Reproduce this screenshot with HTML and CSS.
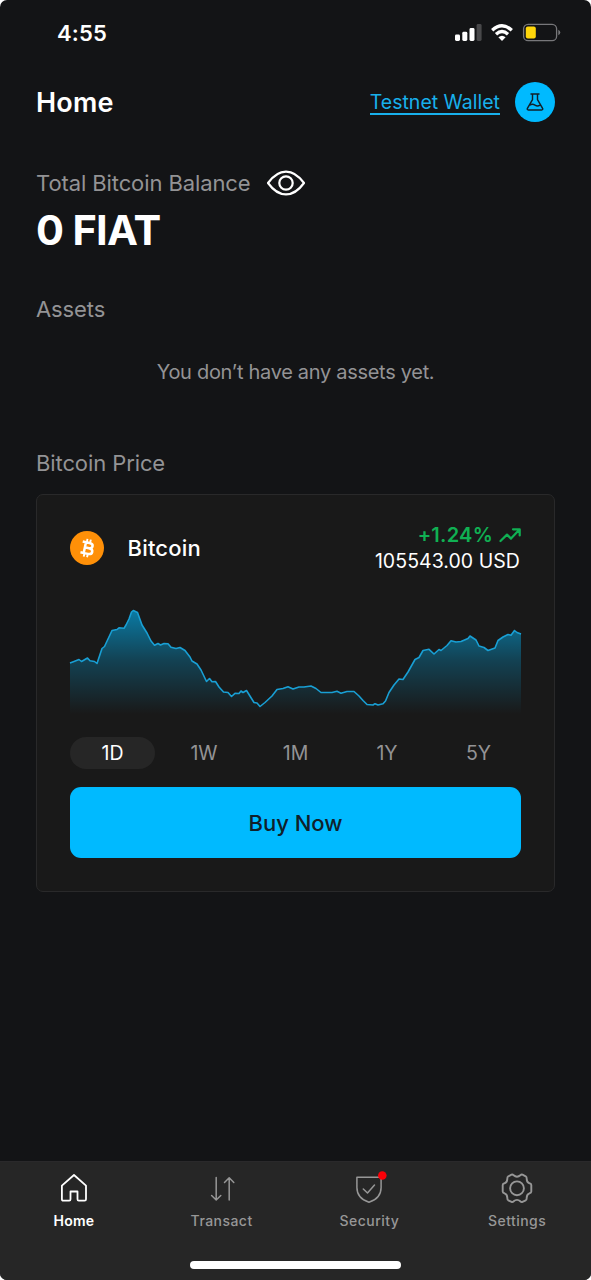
FILE: index.html
```html
<!DOCTYPE html>
<html lang="en">
<head>
<meta charset="utf-8">
<title>Home</title>
<link rel="stylesheet" href="styles.css">
</head>
<body>
<div class="screen">
  <div class="status">
    <span class="time">4:55</span>
    <svg class="status-icons" width="108" height="22" viewBox="453 22 108 22">
      <g fill="#fff">
        <rect x="455" y="34.500" width="5" height="6.500" rx="1.400"/>
        <rect x="462.300" y="31.800" width="5" height="9.200" rx="1.400"/>
        <rect x="469.500" y="28" width="5" height="13" rx="1.400"/>
        <rect x="476.600" y="24" width="5" height="17" rx="1.400" fill="#48484a"/>
      </g>
      <g fill="none" stroke="#fff" stroke-width="3.300">
        <path d="M492.200 30.300Q502 21.200 511.800 30.300"/>
        <path d="M496 34.300Q502 28.800 508 34.300"/>
      </g>
      <path d="M498.400 37.300Q502 34.200 505.600 37.300L502 41Z" fill="#fff"/>
      <rect x="523.600" y="24.300" width="33" height="16.400" rx="4.500" fill="none" stroke="#77777a" stroke-width="1.300"/>
      <rect x="525.800" y="26.400" width="10" height="12.200" rx="2" fill="#ffd60a"/>
      <path d="M558.300 29.800Q560.300 30.800 560.300 32.500T558.300 35.300Z" fill="#77777a"/>
    </svg>
  </div>

  <header class="header">
    <h1 class="title">Home</h1>
    <div class="wallet">
      <a class="wallet-link">Testnet Wallet</a>
      <span class="wallet-badge">
        <svg width="20" height="20" viewBox="0 0 20 20" fill="none" stroke="#10202a" stroke-width="1.450" stroke-linecap="round" stroke-linejoin="round">
          <path d="M6 2H14M7.500 2V7.600L2.400 16.300Q1.800 17.900 3.300 17.900H16.700Q18.200 17.900 17.600 16.300L12.500 7.600V2M4.800 13.100Q7.500 11.500 10 13.100T15 13.100"/>
        </svg>
      </span>
    </div>
  </header>

  <section class="balance">
    <div class="balance-label">
      <span class="label label-total">Total Bitcoin Balance</span>
      <svg width="40" height="28" viewBox="0 0 40 28" fill="none" stroke="#fff" stroke-width="2.200">
        <path d="M2 14C8 5.700 13.500 2.600 20 2.600S32 5.700 38 14C32 22.300 26.500 25.400 20 25.400S8 22.300 2 14Z" stroke-linejoin="round"/>
        <circle cx="20" cy="14" r="6.700"/>
      </svg>
    </div>
    <div class="amount">0 FIAT</div>
  </section>

  <h2 class="label label-assets">Assets</h2>
  <p class="empty">You don’t have any assets yet.</p>
  <h2 class="label label-price">Bitcoin Price</h2>

  <section class="card">
    <div class="coin">
      <svg width="34" height="34" viewBox="0 0 34 34">
        <circle cx="17" cy="17" r="17" fill="#ff9008"/>
        <g transform="rotate(12 17 17)" fill="none" stroke="#fff" stroke-width="2.500">
          <path d="M11.500 11.600H18.500C23.300 11.600 23.300 16.800 18.500 16.800H14.800H19C24.200 16.800 24.200 22.600 19 22.600H11.500M14.800 11.600V22.600"/>
          <path d="M15.600 8V11.500M19 8V11.500M15.600 22.600V26.100M19 22.600V26.100" stroke-width="1.900"/>
        </g>
      </svg>
      <span class="coin-name">Bitcoin</span>
      <div class="quote">
        <div class="change"><span>+1.24%</span>
          <svg width="22" height="16" viewBox="0 0 22 16" fill="none" stroke="#10b053" stroke-width="2.200" stroke-linejoin="round" stroke-linecap="round">
            <path d="M1.500 14L8 7.600L12 11.600L20 3M14 2.300H20.700V8.500"/>
          </svg>
        </div>
        <div class="price">105543.00 USD</div>
      </div>
    </div>

    <svg class="chart" width="451" height="120" viewBox="70 600 451 120">
      <defs>
        <linearGradient id="area" gradientUnits="userSpaceOnUse" x1="0" y1="608" x2="0" y2="714">
          <stop offset="0" stop-color="#00baff" stop-opacity=".62"/>
          <stop offset=".5" stop-color="#00baff" stop-opacity=".25"/>
          <stop offset="1" stop-color="#00baff" stop-opacity="0"/>
        </linearGradient>
      </defs>
      <path fill="url(#area)" d="M70 663L74 661.500 79 659.500 81.500 661.500 87.500 658 90 660.700 94.500 661.500 97 663.500 99.500 656 102 648.500 104.500 646.500 108 639 112 630.500 117 629.500 119 627.800 124 628.300 126 625 129 619 131.500 612 133.300 610.500 137.500 612.500 142 625 147 633 151 641 154.500 645.300 158 643.500 160.500 645 164 643.500 168 643.700 171 647.300 176 648.500 180 647.500 185 650.500 190 657 192 661 197 664 201 670 206.500 681.500 209.500 678.500 212 681.800 215.500 681.500 219 687 223.500 692 228 692.500 231.500 696.500 235 693.300 239 693.500 241 691 243 692.500 246.500 690.500 249 694.500 254 702.500 257 703 260 706.500 265 702.500 272 696 277 689.500 283 688.500 288 686.700 293 689 299 687 304 687 311 686 316 688.500 321 692.500 332 692.500 337 691.300 341 693.300 347 691.500 354 691.500 359 696 363 700.500 367 704.500 373 705 375 703.700 378 705 383 703.800 385.500 701 389 692.500 394 685 399 679 403 679.500 408 672 415 659.500 419 657.500 423 650.500 429 649.300 434 654 439 649.500 441 650.500 447 645.500 451 640.700 456 642 461 641.500 468 638.500 470 636 476 640 479 646 484 647.500 488 650.500 495 648 498 640.500 503 637 508 634.500 511 635.300 514.500 630.500 517 632.500 521 634V716H70Z"/>
      <path class="line" d="M70 663L74 661.500 79 659.500 81.500 661.500 87.500 658 90 660.700 94.500 661.500 97 663.500 99.500 656 102 648.500 104.500 646.500 108 639 112 630.500 117 629.500 119 627.800 124 628.300 126 625 129 619 131.500 612 133.300 610.500 137.500 612.500 142 625 147 633 151 641 154.500 645.300 158 643.500 160.500 645 164 643.500 168 643.700 171 647.300 176 648.500 180 647.500 185 650.500 190 657 192 661 197 664 201 670 206.500 681.500 209.500 678.500 212 681.800 215.500 681.500 219 687 223.500 692 228 692.500 231.500 696.500 235 693.300 239 693.500 241 691 243 692.500 246.500 690.500 249 694.500 254 702.500 257 703 260 706.500 265 702.500 272 696 277 689.500 283 688.500 288 686.700 293 689 299 687 304 687 311 686 316 688.500 321 692.500 332 692.500 337 691.300 341 693.300 347 691.500 354 691.500 359 696 363 700.500 367 704.500 373 705 375 703.700 378 705 383 703.800 385.500 701 389 692.500 394 685 399 679 403 679.500 408 672 415 659.500 419 657.500 423 650.500 429 649.300 434 654 439 649.500 441 650.500 447 645.500 451 640.700 456 642 461 641.500 468 638.500 470 636 476 640 479 646 484 647.500 488 650.500 495 648 498 640.500 503 637 508 634.500 511 635.300 514.500 630.500 517 632.500 521 634"/>
    </svg>

    <div class="ranges">
      <span class="range active">1D</span>
      <span class="range">1W</span>
      <span class="range">1M</span>
      <span class="range">1Y</span>
      <span class="range">5Y</span>
    </div>
    <button class="buy">Buy Now</button>
  </section>

  <nav class="nav">
    <div class="tabs">
      <div class="tab current">
        <svg width="34" height="34" viewBox="0 0 34 34"><path d="M17 4L29 14.600V28.300Q29 29.700 27.600 29.700H21.800Q20.500 29.700 20.500 28.300V20.500H13.500V28.300Q13.500 29.700 12.200 29.700H6.300Q4.900 29.700 4.900 28.300V14.600Z"/></svg>
        <span>Home</span>
      </div>
      <div class="tab">
        <svg width="34" height="34" viewBox="0 0 34 34"><path d="M11.200 6.500V28.700M6.600 24.500L11.200 29L15.800 24.500M24.200 29V7M19.500 11.500L24.200 6.800L28.800 11.500"/></svg>
        <span>Transact</span>
      </div>
      <div class="tab">
        <svg width="34" height="34" viewBox="0 0 34 34"><path d="M4.900 6.300H29.100V16.500C29.100 23.500 25.500 28.500 17 31.300C8.500 28.500 4.900 23.500 4.900 16.500ZM11.300 18L15.500 22L22.500 14"/><circle cx="30.300" cy="4.500" r="4.300" fill="#fb0007" stroke="none"/></svg>
        <span>Security</span>
      </div>
      <div class="tab">
        <svg width="34" height="34" viewBox="0 0 34 34" class="gear"><circle cx="17" cy="17.300" r="6.900"/><path d="M11.500 3.700Q12.600 3.200 13.700 4.300Q15.200 5.700 17 5.700T20.300 4.300Q21.400 3.200 22.500 3.700L25.700 5.300Q26.800 6 26.700 8Q26.800 11.500 29.500 12.300Q31.300 12.700 31.300 14V20.600Q31.300 21.900 29.500 22.300Q26.800 23.100 26.700 26.600Q26.800 28.600 25.700 29.300L22.500 30.900Q21.400 31.400 20.300 30.300Q18.800 28.900 17 28.900T13.700 30.300Q12.600 31.400 11.500 30.900L8.300 29.300Q7.200 28.600 7.300 26.600Q7.200 23.100 4.500 22.300Q2.700 21.900 2.700 20.600V14Q2.700 12.700 4.500 12.300Q7.200 11.500 7.300 8Q7.200 6 8.300 5.300Z"/></svg>
        <span>Settings</span>
      </div>
    </div>
    <div class="home-bar"></div>
  </nav>
</div>
</body>
</html>
```
FILE: styles.css
```css
* { box-sizing: border-box; }
body { margin: 0; background: #fff; font-family: Inter, "Liberation Sans", sans-serif; }
h1, h2, p { margin: 0; font-weight: 400; }
svg { display: block; flex: none; overflow: visible; }
.screen { width: 591px; height: 1280px; background: #131416; border-radius: 7px; overflow: hidden; display: flex; flex-direction: column; white-space: nowrap; }
.status { height: 66px; padding: 0 30px 0 57px; display: flex; justify-content: space-between; align-items: center; flex: none; color: #fff; }
.time { font-size: 22px; font-weight: 600; letter-spacing: .2px; }
.header { margin: 16px 36px 0; height: 40px; display: flex; justify-content: space-between; align-items: center; flex: none; }
.title { font-size: 27px; font-weight: 600; letter-spacing: .2px; color: #fff; }
.wallet { display: flex; align-items: center; gap: 15px; }
.wallet-link { font-size: 19.500px; line-height: 22px; color: #18b0ec; border-bottom: 2px solid #18b0ec; padding-top: 2px; }
.wallet-badge { width: 40px; height: 40px; border-radius: 50%; background: #00baff; display: flex; align-items: center; justify-content: center; }
.balance { margin: 47px 36px 0; }
.balance-label { display: flex; align-items: center; gap: 16px; height: 28px; }
.label { font-size: 22px; line-height: 28px; letter-spacing: -.1px; color: #939395; }
.label-total { width: 214px; }
.amount { font-size: 41.500px; line-height: 50px; margin-top: 8px; font-weight: 700; letter-spacing: -.7px; color: #fff; }
.label-assets { margin: 40px 36px 0; }
.empty { margin-top: 35px; text-align: center; font-size: 20px; line-height: 28px; letter-spacing: -.3px; color: #939395; }
.label-price { margin: 63px 36px 0; }
.card { margin: 17px 36px 0; height: 398px; border: 1px solid #29292a; border-radius: 7px; background: #191919; padding: 26px 33px 0; }
.coin { display: flex; align-items: center; height: 54px; }
.coin-name { margin-left: 23.500px; font-size: 22px; font-weight: 500; letter-spacing: .2px; color: #fff; }
.quote { margin-left: auto; text-align: right; }
.change { display: flex; align-items: center; justify-content: flex-end; gap: 6px; height: 27px; font-size: 20px; font-weight: 600; letter-spacing: .25px; color: #10b053; }
.price { font-size: 19.500px; line-height: 27px; color: #fff; letter-spacing: .05px; padding-right: 1px; }
.chart { margin-top: 25px; }
.line { fill: none; stroke: #199fd4; stroke-width: 1.600px; stroke-linejoin: round; }
.ranges { margin-top: 17px; display: flex; gap: 6.500px; height: 32px; }
.range { width: 85px; line-height: 32px; border-radius: 16px; text-align: center; font-size: 19.500px; color: #939395; }
.active { background: #262626; color: #fff; }
.buy { display: block; width: 451px; height: 71px; margin-top: 18px; border: 0; border-radius: 11px; background: #00baff; font: 500 22px Inter, sans-serif; color: #10202a; }
.nav { margin-top: auto; height: 119px; background: #262626; border-top: 1px solid #2a292b; flex: none; padding-top: 9px; }
.tabs { display: grid; grid-template-columns: repeat(4, 1fr); }
.tab { display: flex; flex-direction: column; align-items: center; font-size: 14px; font-weight: 500; letter-spacing: .45px; line-height: 20px; gap: 6px; color: #979797; }
.tab svg { fill: none; stroke: currentColor; stroke-width: 1.500px; stroke-linejoin: round; stroke-linecap: round; }
.tab .gear { stroke-width: 1.900px; }
.tab.current { color: #fff; font-weight: 600; letter-spacing: .2px; }
.current svg { stroke-width: 1.800px; }
.home-bar { width: 211px; height: 8px; border-radius: 4px; background: #fff; margin: 30px auto 0; }
```
